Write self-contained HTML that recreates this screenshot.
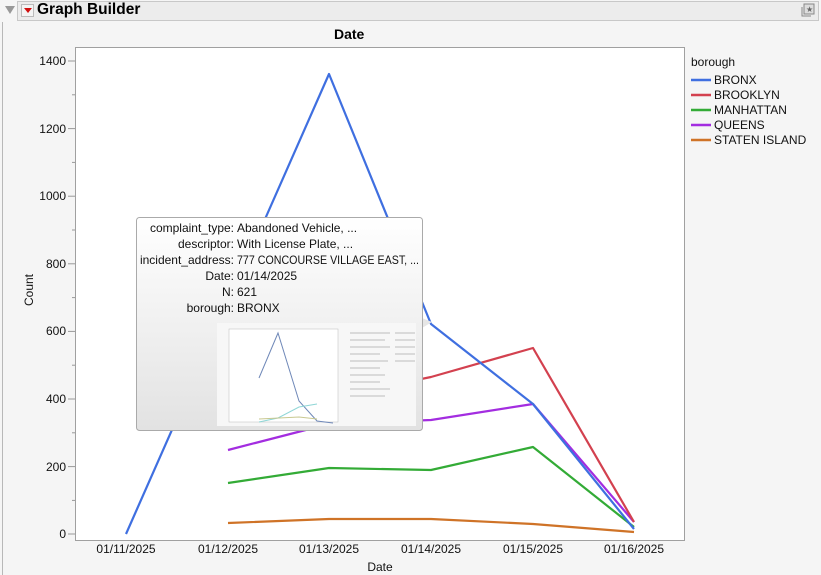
<!DOCTYPE html>
<html><head><meta charset="utf-8"><style>
body{margin:0;width:821px;height:575px;background:#f5f5f5;font-family:"Liberation Sans",sans-serif;overflow:hidden;position:relative}
.hdr{position:absolute;left:17px;top:1px;width:802px;height:20px;background:#ececec;border:1px solid #c8c8c8;box-sizing:border-box}
.t{position:absolute;font-size:12px;color:#111}
</style></head><body>
<div style="position:absolute;left:2px;top:22px;width:1px;height:553px;background:#b8b8b8"></div>
<svg style="position:absolute;left:4px;top:5px" width="12" height="10"><path d="M1 1 L11 1 L6 9 Z" fill="#999"/></svg>
<div class="hdr"></div>
<div style="position:absolute;left:21px;top:4px;width:13px;height:13px;border:1px solid #bbb;background:#f4f4f4;box-sizing:border-box"></div>
<svg style="position:absolute;left:23px;top:8px" width="10" height="6"><path d="M1 0 L9 0 L5 5 Z" fill="#d01010"/></svg>
<div class="t" style="left:37px;top:1px;font-size:15.5px;font-weight:bold;color:#000">Graph Builder</div>
<svg style="position:absolute;left:800px;top:3px" width="16" height="16"><rect x="4" y="1" width="10" height="10" fill="#ddd" stroke="#888"/><path d="M2 4 V13 H11" fill="none" stroke="#888"/><text x="6" y="9" font-size="8" fill="#666">★</text></svg>
<div class="t" style="left:334px;top:26px;font-size:14px;font-weight:bold;color:#000">Date</div>
<svg style="position:absolute;left:0;top:0" width="821" height="575">
<rect x="75.5" y="47.5" width="609" height="493" fill="#fff" stroke="#a0a0a0"/>
<g stroke="#999">
<line x1="68" x2="75" y1="61" y2="61"/><line x1="68" x2="75" y1="128.6" y2="128.6"/><line x1="68" x2="75" y1="196.2" y2="196.2"/><line x1="68" x2="75" y1="263.8" y2="263.8"/><line x1="68" x2="75" y1="331.4" y2="331.4"/><line x1="68" x2="75" y1="399" y2="399"/><line x1="68" x2="75" y1="466.6" y2="466.6"/><line x1="68" x2="75" y1="534" y2="534"/>
<line x1="72" x2="75" y1="94.8" y2="94.8"/><line x1="72" x2="75" y1="162.4" y2="162.4"/><line x1="72" x2="75" y1="230" y2="230"/><line x1="72" x2="75" y1="297.6" y2="297.6"/><line x1="72" x2="75" y1="365.2" y2="365.2"/><line x1="72" x2="75" y1="432.8" y2="432.8"/><line x1="72" x2="75" y1="500.4" y2="500.4"/>
</g>
<g font-size="12" fill="#111" text-anchor="end" font-family="Liberation Sans">
<text x="66" y="65">1400</text><text x="66" y="133">1200</text><text x="66" y="200">1000</text><text x="66" y="268">800</text><text x="66" y="335">600</text><text x="66" y="403">400</text><text x="66" y="471">200</text><text x="66" y="538">0</text>
</g>
<g font-size="12" fill="#111" text-anchor="middle" font-family="Liberation Sans">
<text x="126" y="553">01/11/2025</text><text x="228" y="553">01/12/2025</text><text x="329" y="553">01/13/2025</text><text x="431" y="553">01/14/2025</text><text x="533" y="553">01/15/2025</text><text x="634" y="553">01/16/2025</text>
<text x="380" y="571">Date</text>
<text x="33" y="290" transform="rotate(-90 33 290)" text-anchor="middle">Count</text>
</g>
<g fill="none" stroke-width="2.2" stroke-linejoin="round">
<polyline stroke="#cf7327" points="228,523 329,519 431,519 533,524 634,532"/>
<polyline stroke="#33ab36" points="228,483 329,468 431,470 533,447 634,527"/>
<polyline stroke="#a32de0" points="228,450 329,424 431,420 533,404 634,522"/>
<polyline stroke="#d3414f" points="228,420 329,398 431,377 533,348 634,522"/>
<polyline stroke="#3f6fe0" points="126,534 228,303 329,74 431,324 533,404 634,529"/>
</g>
<text x="691" y="66" font-size="12" fill="#111" font-family="Liberation Sans">borough</text>
<g stroke-width="2.5">
<line x1="691" x2="711" y1="80" y2="80" stroke="#3f6fe0"/><line x1="691" x2="711" y1="95" y2="95" stroke="#d3414f"/><line x1="691" x2="711" y1="110" y2="110" stroke="#33ab36"/><line x1="691" x2="711" y1="125" y2="125" stroke="#a32de0"/><line x1="691" x2="711" y1="140" y2="140" stroke="#cf7327"/>
</g>
<g font-size="12" fill="#111" font-family="Liberation Sans">
<text x="714" y="84">BRONX</text><text x="714" y="99">BROOKLYN</text><text x="714" y="114">MANHATTAN</text><text x="714" y="129">QUEENS</text><text x="714" y="144">STATEN ISLAND</text>
</g>
<defs><linearGradient id="g" x1="0" y1="0" x2="0" y2="1"><stop offset="0" stop-color="#ffffff"/><stop offset="1" stop-color="#e2e2e2"/></linearGradient></defs>
<path d="M422 318 L432 322 L422 328 Z" fill="#e6e6e6"/>
<rect x="136.5" y="217.5" width="286" height="213" rx="3" fill="url(#g)" stroke="#aaa"/>
<g font-size="12" fill="#111" font-family="Liberation Sans">
<g text-anchor="end"><text x="234" y="232">complaint_type:</text><text x="234" y="248">descriptor:</text><text x="234" y="264">incident_address:</text><text x="234" y="280">Date:</text><text x="234" y="296">N:</text><text x="234" y="312">borough:</text></g>
<text x="237" y="232">Abandoned Vehicle, ...</text><text x="237" y="248">With License Plate, ...</text><text x="237" y="264" textLength="182" lengthAdjust="spacingAndGlyphs">777 CONCOURSE VILLAGE EAST, ...</text><text x="237" y="280">01/14/2025</text><text x="237" y="296">621</text><text x="237" y="312">BRONX</text>
</g>
<rect x="217" y="323" width="199" height="103" fill="#f7f7f7"/>
<rect x="229" y="329" width="109" height="93" fill="#fff" stroke="#bbb" stroke-width="0.5"/>
<polyline fill="none" stroke="#6f88b8" points="259,378 278,333 299,401 317,421 333,423"/>
<polyline fill="none" stroke="#8fd6d6" points="259,422 278,418 299,407 317,404"/>
<polyline fill="none" stroke="#c8c890" points="259,419 299,417 317,419"/>
<g stroke="#aaa" stroke-width="0.8"><line x1="350" x2="390" y1="333" y2="333"/><line x1="350" x2="385" y1="340" y2="340"/><line x1="350" x2="390" y1="347" y2="347"/><line x1="350" x2="380" y1="354" y2="354"/><line x1="350" x2="388" y1="361" y2="361"/><line x1="350" x2="380" y1="368" y2="368"/><line x1="350" x2="385" y1="375" y2="375"/><line x1="350" x2="380" y1="382" y2="382"/><line x1="350" x2="390" y1="389" y2="389"/><line x1="350" x2="385" y1="396" y2="396"/><line x1="395" x2="415" y1="333" y2="333"/><line x1="395" x2="415" y1="340" y2="340"/><line x1="395" x2="415" y1="347" y2="347"/><line x1="395" x2="415" y1="354" y2="354"/><line x1="395" x2="415" y1="361" y2="361"/></g>
</svg>
</body></html>
